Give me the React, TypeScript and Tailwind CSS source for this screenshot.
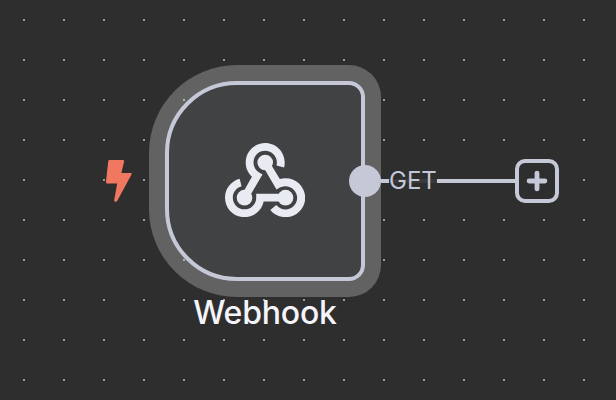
import React from "react";

function WebhookIcon() {
  return (
    <svg viewBox="4 5 41 38" className="mb-[1.5px] mr-px h-[74.2px] w-20" fill="#e9ebf3">
      <circle cx="35" cy="33" r="4" />
      <circle cx="14" cy="33" r="4" />
      <circle cx="24.600" cy="15" r="4" />
      <path d="M35 43c-3 0-5.900-1.400-7.800-3.700l3.100-2.500c1.100 1.400 2.900 2.300 4.700 2.300 3.300 0 6-2.700 6-6s-2.700-6-6-6c-1 0-2 .3-2.900.7l-1.700 1L22.900 16l3.500-1.900 5.700 9.400c1-.3 2-.5 3-.5 5.500 0 10 4.500 10 10S40.500 43 35 43z" />
      <path d="M14 43C8.500 43 4 38.500 4 33c0-4.600 3.100-8.500 7.500-9.700l1 3.900C9.900 27.900 8 30.300 8 33c0 3.300 2.700 6 6 6s6-2.700 6-6v-2h15v4H23.800C22.900 39.600 18.800 43 14 43z" />
      <path d="M15.700 34l-3.400-2 5.500-9.700c-2-1.900-3.200-4.500-3.200-7.300 0-5.500 4.500-10 10-10s10 4.500 10 10c0 .9-.1 1.700-.3 2.500l-3.900-1c.1-.5.2-1 .2-1.500 0-3.300-2.700-6-6-6s-6 2.700-6 6c0 2.100 1.100 4 2.900 5.100l1.700 1L15.700 34z" />
    </svg>
  );
}

function TriggerBolt() {
  return (
    <svg viewBox="0 0 26 42" className="absolute left-[106px] top-[160px] h-[42px] w-[26px]" fill="#f07860">
      <path d="M3.600 0H16.900Q18.500 0 18.100 1.500L15.400 13H24.600Q26.300 13 25.500 14.600L11.300 40.800Q10.500 42 9.200 41.800Q7.900 41.500 8.200 40.100L11.200 23.600H1.300Q-.1 23.500 0 22.100L2.200 1.400Q2.400 0 3.600 0Z" />
    </svg>
  );
}

function WebhookNode() {
  return (
    <div className="absolute left-[165px] top-[81px] flex size-[200px] items-center justify-center rounded-l-[72px] rounded-r-[16px] border-4 border-[#c5c8d6] bg-[#414243] shadow-[0_0_0_16px_rgba(255,255,255,0.25)]">
      <WebhookIcon />
    </div>
  );
}

function Connection() {
  return (
    <div className="absolute left-[349px] top-[159px] flex h-11 w-[210px] items-center">
      <div className="size-8 shrink-0 rounded-full bg-[#c5c8d6]" />
      <div className="h-1 w-2 shrink-0 bg-[#c5c8d6]" />
      <div className="relative h-7 w-12 shrink-0">
        <div className="absolute left-0 top-3 h-1 w-full bg-[#3a3a3c]" />
        <span className="absolute left-0 top-0 text-2xl font-normal leading-7 text-[#c5c8d6]">GET</span>
      </div>
      <div className="h-1 grow bg-[#c5c8d6]" />
      <button className="flex size-11 shrink-0 items-center justify-center rounded-[10px] border-4 border-[#c5c8d6]">
        <svg viewBox="0 0 22 22" className="size-[22px]" stroke="#c5c8d6" strokeWidth="4.800" strokeLinecap="round">
          <path d="M11 3.100V18.900M3.100 11H18.900" />
        </svg>
      </button>
    </div>
  );
}

export default function App() {
  return (
    <main className="relative h-[400px] w-[616px] overflow-hidden bg-[#2e2e2e] font-['Inter',sans-serif]">
      <svg className="absolute inset-0 h-full w-full">
        <defs>
          <pattern id="dots" x="23" y="19" width="40" height="40" patternUnits="userSpaceOnUse">
            <rect width="2" height="2" fill="#999" />
          </pattern>
        </defs>
        <rect width="616" height="400" fill="url(#dots)" />
      </svg>
      <TriggerBolt />
      <WebhookNode />
      <Connection />
      <div className="absolute left-[165px] top-[293px] w-[200px] text-center text-[32px] font-medium leading-10 tracking-[-0.2px] text-[#f4f4fa]">
        Webhook
      </div>
    </main>
  );
}
